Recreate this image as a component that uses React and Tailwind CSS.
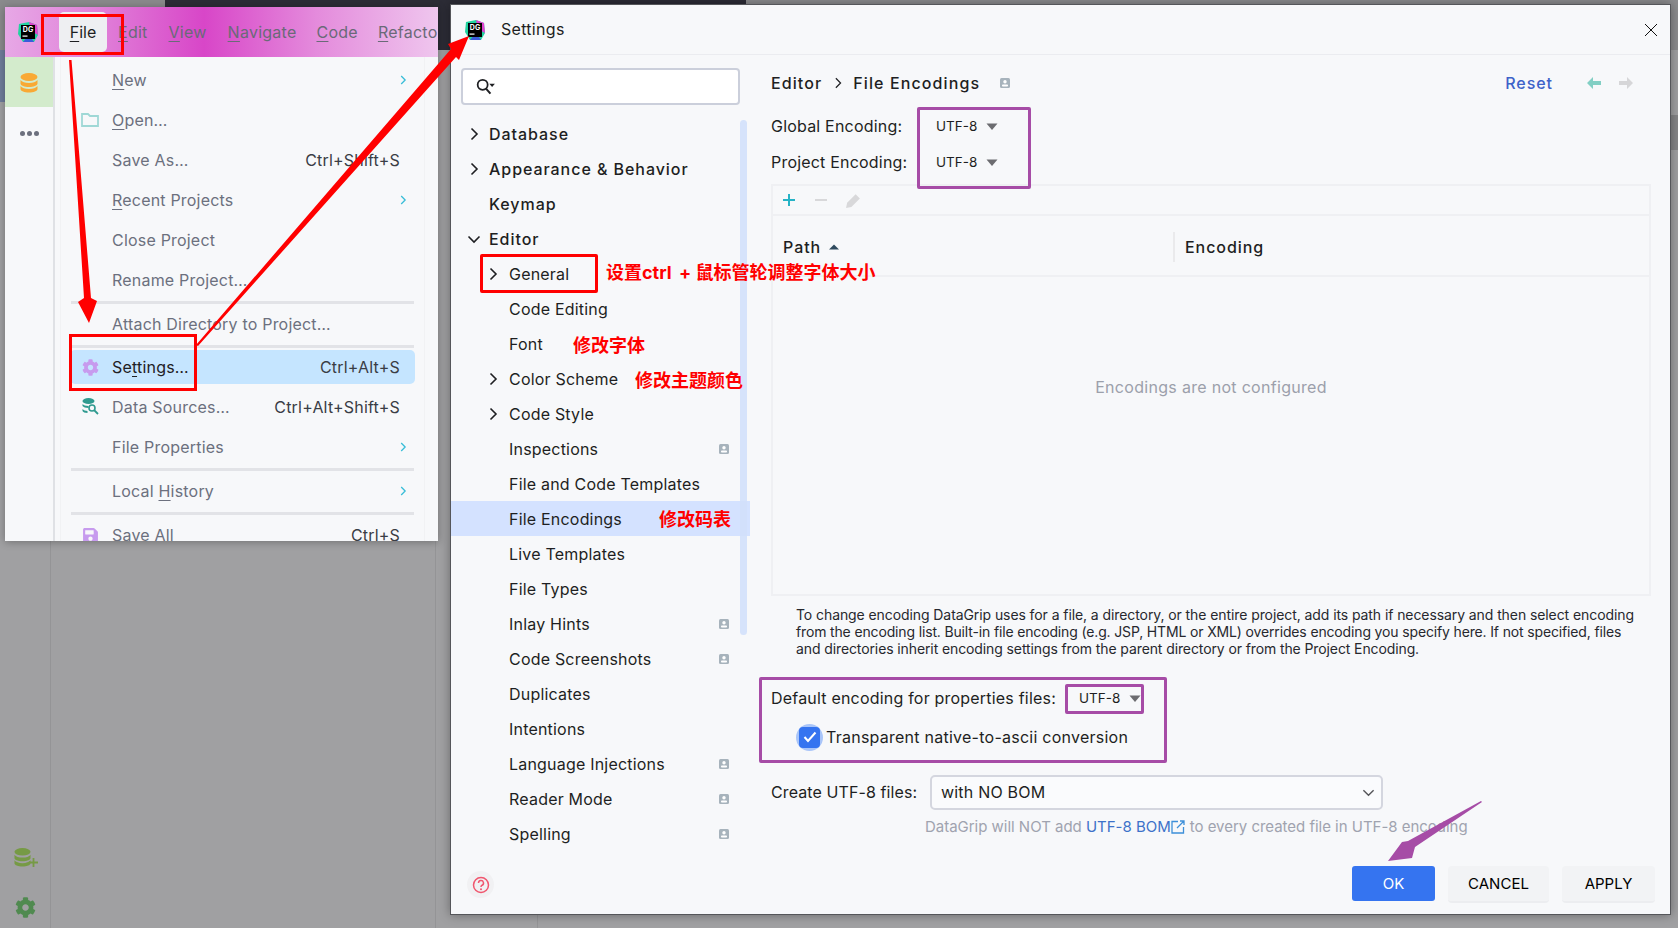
import { FaCog, FaSave } from "react-icons/fa";

const FONT = { fontFamily: "Inter, 'Noto Sans CJK SC', sans-serif" };

const TREE = [
  { name: "Database", top: true, arrow: "right" },
  { name: "Appearance & Behavior", top: true, arrow: "right" },
  { name: "Keymap", top: true },
  { name: "Editor", top: true, arrow: "down" },
  { name: "General", arrow: "right" },
  { name: "Code Editing" },
  { name: "Font" },
  { name: "Color Scheme", arrow: "right" },
  { name: "Code Style", arrow: "right" },
  { name: "Inspections", badge: true },
  { name: "File and Code Templates" },
  { name: "File Encodings", active: true },
  { name: "Live Templates" },
  { name: "File Types" },
  { name: "Inlay Hints", badge: true },
  { name: "Code Screenshots", badge: true },
  { name: "Duplicates" },
  { name: "Intentions" },
  { name: "Language Injections", badge: true },
  { name: "Reader Mode", badge: true },
  { name: "Spelling", badge: true },
];

const MENU_BAR = [
  ["F", "ile", "w-[48px] h-[40px] rounded-[5px] bg-[#eeeff2] text-[#1e1f22] flex items-center justify-center mr-[11px]"],
  ["E", "dit", "mr-[21px] tracking-[0.25px]"],
  ["V", "iew", "mr-[21px] tracking-[0.25px]"],
  ["N", "avigate", "mr-[20px] tracking-[0.25px]"],
  ["C", "ode", "mr-[20px] tracking-[0.25px]"],
  ["R", "efacto", "tracking-[0.25px]"],
];

function Logo() {
  return (
    <svg width="22" height="22" viewBox="0 0 22 22" className="shrink-0">
      <polygon points="2,3 12,1 20,4 21,14 17,21 6,21 1,13" fill="#22d3a0" />
      <polygon points="12,1 20,4 21,14 14,10" fill="#e040d0" />
      <polygon points="6,21 17,21 12,14" fill="#3b5bdb" />
      <rect x="4" y="4" width="14" height="14" fill="#000" />
      <text x="11" y="11" textAnchor="middle" fontSize="7" fontWeight="700" fill="#fff" fontFamily="Inter, sans-serif">DG</text>
      <rect x="5.5" y="14.5" width="5" height="1.2" fill="#fff" />
    </svg>
  );
}

function Chevron({ dir = "right", size = 14, color = "#1e1f22", width = 1.6 }) {
  const pts = dir === "right" ? "4.5,1.5 10,7 4.5,12.5" : "1.5,4.5 7,10 12.5,4.5";
  return (
    <svg width={size} height={size} viewBox="0 0 14 14" className="shrink-0">
      <polyline points={pts} fill="none" stroke={color} strokeWidth={width} />
    </svg>
  );
}

function Caret({ color = "#6c6c70" }) {
  return (
    <svg width="12" height="8" viewBox="0 0 12 8" className="mt-[2px]">
      <polygon points="0.5,0.5 11.5,0.5 6,7" fill={color} />
    </svg>
  );
}

function Badge() {
  return (
    <svg width="10" height="10" viewBox="0 0 10 10" className="shrink-0">
      <rect width="10" height="10" rx="1.5" fill="#a7b3bc" />
      <circle cx="5" cy="3.8" r="1.7" fill="#fff" />
      <rect x="2" y="6.5" width="6" height="2" rx="0.8" fill="#fff" />
    </svg>
  );
}

function DbIcon({ color, width = 18, height = 20 }) {
  return (
    <svg width={width} height={height} viewBox="0 0 18 20" className="shrink-0">
      <ellipse cx="9" cy="4" rx="8.5" ry="4" fill={color} />
      <path d="M0.5 7c1.5 2 4.5 3 8.5 3s7-1 8.5-3v3.5C17.500 12.500 13.500 14 9 14S0.500 12.500 0.500 10.500z" fill={color} />
      <path d="M0.500 13c1.500 2 4.500 3 8.500 3s7-1 8.500-3v3c0 2-4 3.500-8.500 3.500S0.500 18 0.500 16z" fill={color} />
    </svg>
  );
}

function MenuItem({ pre = "", u, post = "", shortcut, sub, icon, active }) {
  return (
    <div className={`h-[40px] mx-[9px] flex items-center ${active ? "py-[3px]" : ""}`}>
      <div className={`relative flex items-center w-full h-full pr-[15px] ${active ? "bg-[#c5e5ff] rounded-[5px] text-[#1f2024]" : "text-[#6c707e]"}`}>
        <div className="w-[40px] shrink-0 flex justify-center">{icon}</div>
        <span className="pl-[2px] text-[16px] tracking-[0.2px]">
          {pre}
          {u && <span className="underline underline-offset-[3px]">{u}</span>}
          {post}
        </span>
        {shortcut && <span className="ml-auto text-[16px] tracking-[0.2px] text-[#3a3d45]">{shortcut}</span>}
        {sub && <span className="ml-auto -mr-[8px]"><Chevron color="#38bdd8" size={10} width={1.8} /></span>}
      </div>
    </div>
  );
}

function MenuSep() {
  return (
    <div className="h-[4px] flex items-center px-[10px]">
      <div className="h-[3px] w-full bg-[#e2e3e7]" />
    </div>
  );
}

function TreeRow({ item }) {
  return (
    <div className={`h-[35px] flex items-center text-[16px] ${item.active ? "bg-[#d4e2ff]" : ""} ${item.top ? "pl-[16px] font-medium tracking-[0.95px] text-[#1e1f22]" : "pl-[35px] tracking-[0.2px] text-[#1e1f22]"}`}>
      <span className="w-[14px] shrink-0 flex justify-center">
        {item.arrow && <Chevron dir={item.arrow} size={14} />}
      </span>
      <span className={item.top ? "pl-[8px]" : "pl-[9px]"}>{item.name}</span>
      {item.badge && <span className="ml-auto mr-[21px]"><Badge /></span>}
    </div>
  );
}

function FileWindow() {
  return (
    <div className="absolute left-[5px] top-[7px] w-[433px] h-[534px] bg-[#f7f8fa] overflow-hidden shadow-[0_1px_8px_rgba(0,0,0,0.3)] flex flex-col">
      <div className="h-[50px] shrink-0 flex items-center bg-[linear-gradient(90deg,#e7a8e6_0%,#e07fd8_22%,#d846c8_46%,#e48bdc_72%,#efc6ee_100%)]">
        <div className="w-[54px] shrink-0 pl-[12px]"><Logo /></div>
        <div className="flex items-center text-[16px] text-[#6a6a78]">
          {MENU_BAR.map(([u, post, cls]) => (
            <span key={u} className={cls}>
              <span className="underline underline-offset-[3px]">{u}</span>{post}
            </span>
          ))}
        </div>
      </div>
      <div className="flex flex-1 min-h-0">
        <div className="w-[50px] shrink-0 border-r-2 border-[#dfe1e5] flex flex-col items-center">
          <div className="h-[50px] w-full bg-[#d3ebcc] flex items-center justify-center pt-[1px]">
            <DbIcon color="#f9a935" />
          </div>
          <div className="mt-[24px] flex gap-[2px]">
            <i className="w-[5px] h-[5px] rounded-full bg-[#6c707e]" />
            <i className="w-[5px] h-[5px] rounded-full bg-[#6c707e]" />
            <i className="w-[5px] h-[5px] rounded-full bg-[#6c707e]" />
          </div>
        </div>
        <div className="ml-[5px] w-[365px] pt-[3px] border-x border-[#f1f2f4] shrink-0">
          <MenuItem u="N" post="ew" sub />
          <MenuItem
            u="O"
            post="pen…"
            icon={
              <svg width="18" height="14" viewBox="0 0 18 14"><path d="M1 13V1h6l2 2h8v10z" fill="none" stroke="#9fd8d6" strokeWidth="1.8" /></svg>
            }
          />
          <MenuItem pre="Save As…" shortcut="Ctrl+Shift+S" />
          <MenuItem u="R" post="ecent Projects" sub />
          <MenuItem pre="Close Project" />
          <MenuItem pre="Rename Project…" />
          <MenuSep />
          <MenuItem pre="Attach Directory to Project…" />
          <MenuSep />
          <div className="-mt-[1px]">
            <MenuItem pre="Se" u="t" post="tings…" shortcut="Ctrl+Alt+S" active icon={<FaCog size={17} color="#c79bee" />} />
          </div>
          <MenuItem
            pre="Data Sources…"
            shortcut="Ctrl+Alt+Shift+S"
            icon={
              <svg width="18" height="18" viewBox="0 0 18 18">
                <ellipse cx="7.500" cy="3" rx="6" ry="3" fill="#2f9a8f" />
                <path d="M1.500 6c1 1.200 3 2 6 2v2c-3 0-5-.8-6-2zM1.500 11c1 1.200 3 2 5 2v2c-2.500 0-4.500-.8-5-2z" fill="#2f9a8f" />
                <circle cx="11" cy="10" r="3" fill="none" stroke="#2f9a8f" strokeWidth="1.6" />
                <line x1="13" y1="12" x2="17" y2="16" stroke="#2f9a8f" strokeWidth="1.8" />
              </svg>
            }
          />
          <MenuItem pre="File Properties" sub />
          <MenuSep />
          <MenuItem pre="Local " u="H" post="istory" sub />
          <MenuSep />
          <MenuItem pre="Save All" shortcut="Ctrl+S" icon={<FaSave size={17} color="#c79bee" />} />
        </div>
      </div>
    </div>
  );
}

function SettingsDialog() {
  return (
    <div className="absolute left-[450px] top-[4px] w-[1221px] h-[911px] bg-[#f7f8fa] border border-[#55565a] flex flex-col text-[#1e1f22] shadow-[0_0_10px_rgba(0,0,0,0.35)]">
      <div className="h-[50px] shrink-0 border-b border-[#ebecf0] flex items-center pl-[13px] pr-[11px]">
        <Logo />
        <span className="ml-[15px] -mt-[2px] text-[16px] tracking-[0.3px]">Settings</span>
        <svg width="14" height="14" viewBox="0 0 14 14" className="ml-auto mr-[1px]">
          <path d="M1 1l12 12M13 1L1 13" stroke="#111" strokeWidth="1" />
        </svg>
      </div>

      <div className="flex flex-1 min-h-0">
        {/* tree */}
        <div className="w-[299px] shrink-0 relative">
          <div className="mt-[13px] mx-[10px] w-[279px] h-[37px] bg-white border-2 border-[#cbcfdb] rounded-[4px] flex items-center pl-[13px]">
            <svg width="20" height="18" viewBox="0 0 18 16">
              <circle cx="6" cy="6" r="4.500" fill="none" stroke="#1e1f22" strokeWidth="1.600" />
              <line x1="9" y1="9.500" x2="13" y2="14" stroke="#1e1f22" strokeWidth="1.800" />
              <polygon points="12,5 17,5 14.500,8" fill="#1e1f22" />
            </svg>
          </div>
          <div className="mt-[11px]">
            {TREE.map((item) => (
              <TreeRow key={item.name} item={item} />
            ))}
          </div>
          <div className="absolute left-[289px] top-[65px] w-[7px] h-[515px] rounded-full bg-[#d2e0fb]/90" />
          <div className="absolute left-[16px] top-[816px] w-[27px] h-[27px] rounded-full bg-[#f1f1f3] flex items-center justify-center">
            <svg width="18" height="18" viewBox="0 0 18 18">
              <circle cx="9" cy="9" r="7.500" fill="none" stroke="#f0566e" strokeWidth="1.500" />
              <path d="M6.500 7a2.500 2.500 0 1 1 3.500 2.300c-.7.3-1 .7-1 1.700" fill="none" stroke="#f0566e" strokeWidth="1.500" />
              <circle cx="9" cy="13.300" r="1" fill="#f0566e" />
            </svg>
          </div>
        </div>

        {/* content */}
        <div className="flex-1 min-w-0 pl-[21px] pr-[19px] flex flex-col">
          <div className="mt-[16px] h-[24px] flex items-center text-[16px] font-medium tracking-[1.1px]">
            <span>Editor</span>
            <span className="ml-[10px]"><Chevron size={12} width={1.4} /></span>
            <span className="ml-[9px]">File Encodings</span>
            <span className="ml-[20px]"><Badge /></span>
            <span className="ml-auto text-[#3d62c9] tracking-[0.95px]">Reset</span>
            <svg width="14" height="12" viewBox="0 0 14 12" className="ml-[34px]"><polygon points="0,6 6,0 6,4 14,4 14,8 6,8 6,12" fill="#82cfc4" /></svg>
            <svg width="14" height="12" viewBox="0 0 14 12" className="ml-[18px] mr-[18px]"><polygon points="14,6 8,0 8,4 0,4 0,8 8,8 8,12" fill="#d6d6d8" /></svg>
          </div>
          <div className="mt-[13px] h-[36px] flex items-center text-[16px] tracking-[0.2px]">
            <span className="w-[165px]">Global Encoding:</span>
            <span className="pt-[1px] text-[13.5px] tracking-[0px]">UTF-8</span>
            <span className="ml-[9px]"><Caret /></span>
          </div>
          <div className="h-[36px] flex items-center text-[16px] tracking-[0.2px]">
            <span className="w-[165px]">Project Encoding:</span>
            <span className="pt-[1px] text-[13.5px] tracking-[0px]">UTF-8</span>
            <span className="ml-[9px]"><Caret /></span>
          </div>

          <div className="mt-[4px] h-[412px] border-2 border-[#eff0f3] flex flex-col">
            <div className="h-[30px] shrink-0 border-b-2 border-[#eff0f3] flex items-center pl-[9px]">
              <svg width="14" height="14" viewBox="0 0 14 14"><path d="M7 1v12M1 7h12" stroke="#26b3c6" strokeWidth="2" /></svg>
              <svg width="14" height="14" viewBox="0 0 14 14" className="ml-[18px]"><path d="M1 7h12" stroke="#d8d8da" strokeWidth="2" /></svg>
              <svg width="17" height="17" viewBox="0 0 16 16" className="ml-[17px]"><path d="M1 15l1-5 8-8 4 4-8 8z" fill="#d8d8da" /></svg>
            </div>
            <div className="h-[61px] shrink-0 border-b-2 border-[#eff0f3] flex items-center text-[16px] font-medium tracking-[0.95px] pt-[2px]">
              <div className="w-[400px] pl-[10px] flex items-center gap-[8px]">
                <span>Path</span>
                <svg width="10" height="6" viewBox="0 0 10 6"><polygon points="5,0.500 10,5.500 0,5.500" fill="#2f4a5e" /></svg>
              </div>
              <div className="h-[30px] w-[2px] bg-[#eaeaec]" />
              <span className="ml-[10px]">Encoding</span>
            </div>
            <div className="flex-1 flex items-start justify-center pt-[98px] text-[16px] tracking-[0.3px] text-[#9ca0ab]">
              Encodings are not configured
            </div>
          </div>

          <div className="mt-[10px] pl-[25px] text-[14px] leading-[17px] text-[#27282e]">
            <div className="tracking-[-0.085px]">To change encoding DataGrip uses for a file, a directory, or the entire project, add its path if necessary and then select encoding</div>
            <div className="tracking-[-0.15px]">from the encoding list. Built-in file encoding (e.g. JSP, HTML or XML) overrides encoding you specify here. If not specified, files</div>
            <div className="tracking-[-0.107px]">and directories inherit encoding settings from the parent directory or from the Project Encoding.</div>
          </div>

          <div className="mt-[26px] h-[30px] flex items-center text-[16px] tracking-[0.2px]">
            <span>Default encoding for properties files:</span>
            <span className="ml-[23px] text-[13.5px] tracking-[0px]">UTF-8</span>
            <span className="ml-[9px]"><Caret /></span>
          </div>
          <div className="mt-[9px] h-[30px] flex items-center pl-[25px] text-[16px] tracking-[0.25px]">
            <span className="w-[27px] h-[27px] rounded-full bg-[#a9c5f9] flex items-center justify-center">
              <span className="w-[21px] h-[21px] rounded-[4px] bg-[#3574f0] flex items-center justify-center">
                <svg width="14" height="12" viewBox="0 0 14 12"><path d="M1.500 6l3.500 4 7.500-8.500" fill="none" stroke="#fff" strokeWidth="2" /></svg>
              </span>
            </span>
            <span className="ml-[3px]">Transparent native-to-ascii conversion</span>
          </div>
          <div className="mt-[22px] h-[36px] flex items-center text-[16px] tracking-[0.1px]">
            <span className="w-[159px]">Create UTF-8 files:</span>
            <div className="w-[453px] h-[35px] bg-[#fafbfd] border-2 border-[#d4d6df] rounded-[5px] flex items-center pl-[9px] pr-[6px] tracking-[0.2px]">
              with NO BOM
              <span className="ml-auto"><Chevron dir="down" color="#55565a" size={13} width={1.5} /></span>
            </div>
          </div>
          <div className="mt-[5px] h-[24px] flex items-center pl-[154px] text-[15px] tracking-[-0.02px] text-[#a0a3af]">
            <span>DataGrip will NOT add&nbsp;</span>
            <span className="text-[#3d72c9]">UTF-8 BOM</span>
            <svg width="14" height="14" viewBox="0 0 14 14" className="mr-[5px]"><path d="M7 1.500H1v11.500h11.500V7M6 8l7-7M9 1h4v4" fill="none" stroke="#3d8fd9" strokeWidth="1.300" /></svg>
            <span>to every created file in UTF-8 encoding</span>
          </div>
          <div className="mt-[27px] -mr-[4px] flex justify-end items-start gap-[13px] text-[15px]">
            <button className="w-[83px] h-[35px] pt-[2px] rounded-[3px] bg-[#3574f0] text-white">OK</button>
            <button className="w-[101px] h-[37px] pt-[1px] rounded-[4px] bg-[#f2f3f5] border-b-2 border-[#ecedf0] text-black">CANCEL</button>
            <button className="w-[93px] h-[37px] pt-[1px] rounded-[4px] bg-[#f2f3f5] border-b-2 border-[#ecedf0] text-black">APPLY</button>
          </div>
        </div>
      </div>
    </div>
  );
}

function Note({ className, children }) {
  return <div className={`absolute text-[18px] leading-[24px] font-bold text-[#ff0000] whitespace-nowrap ${className}`}>{children}</div>;
}

export default function App() {
  return (
    <div className="relative w-[1678px] h-[928px] overflow-hidden bg-[#a0a0a2]" style={FONT}>
      {/* dimmed IDE behind the dialogs */}
      <div className="absolute left-0 top-0 w-[165px] h-[50px] bg-[#8a8a8c]" />
      <div className="absolute left-0 top-[50px] w-[5px] h-[52px] bg-[#6f7d9b]" />
      <div className="absolute left-[165px] top-0 w-[581px] h-[50px] bg-[#2c2c36]" />
      <div className="absolute left-[746px] top-0 w-[932px] h-[50px] bg-[#8c8c8e]" />
      <div className="absolute left-[50px] top-[541px] w-px h-[387px] bg-[#949496]" />
      <div className="absolute left-[435px] top-[541px] w-px h-[387px] bg-[#949496]" />
      <div className="absolute left-[537px] top-[914px] w-px h-[14px] bg-[#949496]" />
      <div className="absolute left-[1670px] top-[115px] w-[8px] h-[35px] bg-[#858587]" />
      <div className="absolute left-[14px] top-[848px]"><DbIcon color="#769a45" width={17} height={19} /></div>
      <svg width="9" height="9" viewBox="0 0 9 9" className="absolute left-[29px] top-[858px]"><path d="M4.500 0v9M0 4.500h9" stroke="#769a45" strokeWidth="1.800" /></svg>
      <div className="absolute left-[15px] top-[897px]"><FaCog size={21} color="#508a50" /></div>

      <FileWindow />
      <SettingsDialog />

      {/* annotations drawn on top of the screenshot */}
      <div className="absolute left-[41px] top-[14px] w-[83px] h-[41px] border-[3px] border-[#ff0000]" />
      <div className="absolute left-[69px] top-[334px] w-[128px] h-[57px] border-[3px] border-[#ff0000]" />
      <div className="absolute left-[480px] top-[254px] w-[118px] h-[39px] border-[3px] border-[#ff0000] rounded-[2px]" />
      <div className="absolute left-[917px] top-[107px] w-[114px] h-[82px] border-[3px] border-[#a64ca6] rounded-[2px]" />
      <div className="absolute left-[759px] top-[677px] w-[408px] h-[86px] border-[3px] border-[#a64ca6] rounded-[2px]" />
      <div className="absolute left-[1065px] top-[684px] w-[79px] h-[30px] border-[3px] border-[#a64ca6] rounded-[2px]" />

      <Note className="left-[606px] top-[261px]">设置ctrl <span className="ml-[3px]">+</span> 鼠标管轮调整字体大小</Note>
      <Note className="left-[573px] top-[334px]">修改字体</Note>
      <Note className="left-[635px] top-[369px]">修改主题颜色</Note>
      <Note className="left-[659px] top-[508px]">修改码表</Note>

      <svg width="1678" height="928" viewBox="0 0 1678 928" className="absolute left-0 top-0 pointer-events-none">
        <polygon points="69,60 71.500,60 91,298 97,301 89,323 78,302 84,298" fill="#ff0000" />
        <polygon points="196,345 198,346 456,57 459,60 469,36 448,44 451,49" fill="#ff0000" />
        <polygon points="1481,801 1482,802 1415,847 1412,858 1388,861 1402,842 1408,841" fill="#a64ca6" />
      </svg>
    </div>
  );
}
